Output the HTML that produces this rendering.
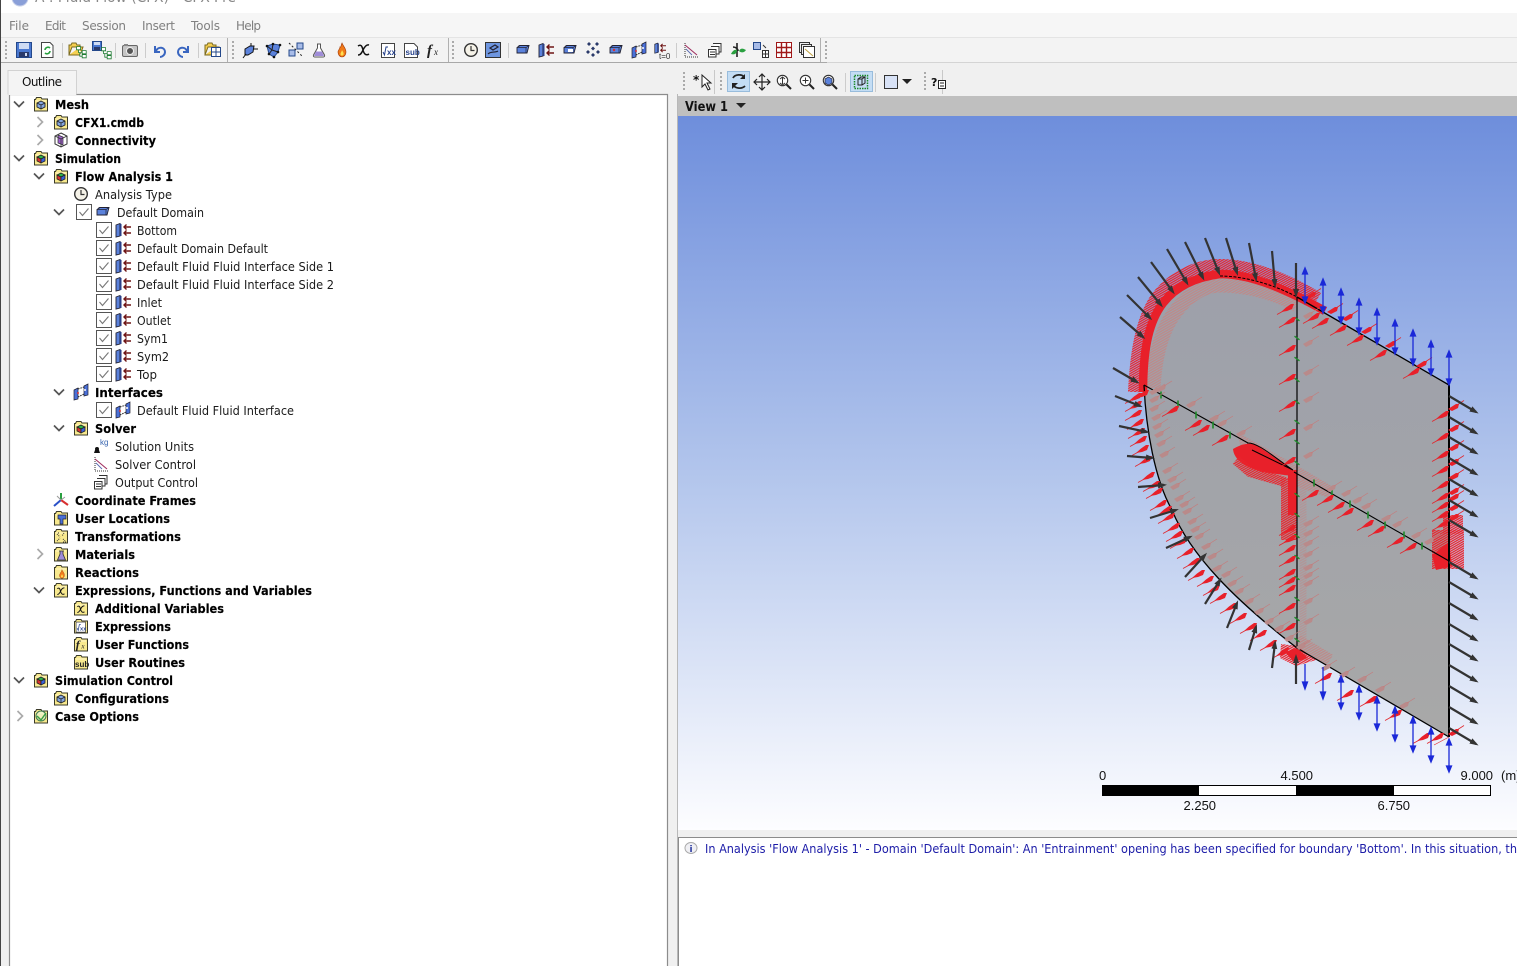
<!DOCTYPE html>
<html><head><meta charset="utf-8"><title>CFX-Pre</title>
<style>
html,body{margin:0;padding:0;width:1517px;height:966px;overflow:hidden;background:#f0f0f0}
svg{display:block;position:absolute;left:0;top:0}
.b{font:bold 12px "DejaVu Sans",sans-serif;fill:#000;stroke:#000;stroke-width:.15}
.n{font:12px "DejaVu Sans",sans-serif;fill:#1a1a1a}
.m{font:12px "DejaVu Sans",sans-serif;fill:#808080}
.s{font:13px "Liberation Sans",sans-serif;fill:#111}
.msg{font:12px "DejaVu Sans",sans-serif;fill:#1c1ca8}
</style></head><body>
<svg width="1517" height="966" viewBox="0 0 1517 966" xmlns="http://www.w3.org/2000/svg">
<defs>
<linearGradient id="sky" x1="0" y1="0" x2="0" y2="1"><stop offset="0" stop-color="#6e8edc"/><stop offset=".5" stop-color="#b2c5ec"/><stop offset="1" stop-color="#fdfdff"/></linearGradient>
<linearGradient id="face" x1="0" y1="0" x2="0" y2="1"><stop offset="0" stop-color="#9da0aa"/><stop offset="1" stop-color="#a8a8a8"/></linearGradient>
<pattern id="h" width="12" height="2" patternUnits="userSpaceOnUse" patternTransform="rotate(-30)"><rect width="12" height="1.300" fill="#e8242c"/></pattern>
<pattern id="hf" width="12" height="2.200" patternUnits="userSpaceOnUse" patternTransform="rotate(-30)"><rect width="12" height="1.300" fill="#bd8a8a"/></pattern>
<marker id="dk" markerWidth="9" markerHeight="7" refX="6" refY="3" orient="auto" markerUnits="userSpaceOnUse"><path d="M0 0L9 3L0 6Z" fill="#333"/></marker>
<g id="ra"><path d="M-15 8.500L-5 3" stroke="#e0282e" stroke-width=".8" fill="none"/><path d="M-11 6L-6 1.500L-1 -2L2 -2L0 3L-5 5Z" fill="#e8202a"/></g>
<g id="rf"><path d="M-1 0L6 -4L9 -4L8 0L2 3Z" fill="#b98a8a"/><path d="M7 -3L15 -8" stroke="#c47c7c" stroke-width=".7"/></g>
<g id="rb"><use href="#rf" x="10" y="-3"/><use href="#ra"/></g>
<g id="ro"><path d="M-1 1L7 -4L10 -4L9 0L3 3Z" fill="#e8202a"/><path d="M8 -3L15 -7.500" stroke="#e0282e" stroke-width=".8"/></g>
<path id="gt" d="M-2.500 -1.800L2.500 1.800" stroke="#1d8a2a" stroke-width="1.300"/>
<path id="gv" d="M0 -3.500V3.500" stroke="#1d8a2a" stroke-width="1.600"/>
<g id="fd"><path d="M1.500 3.500H2.500L3.500 1.500H8L9 3H14.500V15H1.500Z" fill="#f8e98e" stroke="#3a3a2a"/><path d="M3 5H13" stroke="#fff8c8"/></g>
<g id="cu"><path d="M8 5L12 7V11L8 13L4 11V7Z" fill="#84a6e0" stroke="#222" stroke-width=".9"/><path d="M4 7L8 9L12 7M8 9V13" stroke="#222" stroke-width=".8" fill="none"/></g>
<g id="fb"><use href="#fd"/><use href="#cu"/></g>
<g id="fg"><use href="#fd"/><path d="M8 5L12 7L8 9L4 7Z" fill="#2fb24a" stroke="#222" stroke-width=".8"/><path d="M4 7L8 9V13L4 11Z" fill="#d83030" stroke="#222" stroke-width=".8"/><path d="M12 7L8 9V13L12 11Z" fill="#3a60d8" stroke="#222" stroke-width=".8"/></g>
<g id="dc"><path d="M5 5H13L11 3.500H4Z" fill="#b8c8f0" stroke="#223" stroke-width=".7"/><path d="M2 5.500L5 3.500H14L12 11H2Z" fill="#5b82dc" stroke="#223" stroke-width=".9"/><path d="M2 5.500H11L14 3.500M11 5.500V11" fill="none" stroke="#223" stroke-width=".7"/></g>
<g id="bd"><path d="M1 3L5 1.500V14L1 15Z" fill="#5b82dc" stroke="#223" stroke-width=".9"/><path d="M5 1.500L6.500 2V14L5 14Z" fill="#2a3f88"/><path d="M16 5H9M11.500 2.500L9 5L11.500 7.500M16 11H9M11.500 8.500L9 11L11.500 13.500" fill="none" stroke="#6e1414" stroke-width="1.400"/></g>
<g id="ck"><rect x=".5" y=".5" width="15" height="15" fill="#fff" stroke="#555"/><path d="M3.500 8L6.500 11.500L12.500 4.500" fill="none" stroke="#777" stroke-width="1.100"/></g>
<path id="cd" d="M-5 -2.500L0 2.500L5 -2.500" fill="none" stroke="#555" stroke-width="1.700"/>
<path id="cr" d="M-2.500 -5L2.500 0L-2.500 5" fill="none" stroke="#aaa" stroke-width="1.700"/>
<g id="clk"><circle cx="8" cy="8" r="6.300" fill="#f5f2e8" stroke="#333" stroke-width="1.400"/><path d="M8 4V8.500H11.500" fill="none" stroke="#333" stroke-width="1.200"/></g>
<g id="itf"><path d="M1 6L5 4V15L1 16ZM11 2L15 0V11L11 12Z" fill="#4a70d8" stroke="#223" stroke-width=".7"/><path d="M5 5L11 3M5 13L11 10" stroke="#222" stroke-width="1" stroke-dasharray="1.500 1"/><circle cx="5" cy="9" r="1" fill="#d83030"/><circle cx="12" cy="6" r="1" fill="#fff"/></g>
<g id="so"><path d="M2 1V15H15" fill="none" stroke="#333" stroke-dasharray="1 1"/><path d="M2 3L14 13" stroke="#a03060" stroke-width="1.100"/><path d="M3 7L9 13" stroke="#5a6ab0" stroke-width=".9"/></g>
<g id="ou"><path d="M6 1.500H14V10H11" fill="#fff" stroke="#333"/><path d="M4 4.500H12V12H9" fill="#fff" stroke="#333"/><path d="M1.500 7.500H9V15H1.500Z" fill="#fff" stroke="#333"/><path d="M3 10H8M3 12.500H8" stroke="#333"/></g>
<g id="fol"><path d="M1 14V4H3L4 2H8L9 4H12V6H4L1 14H12L15 6H12" fill="#f5cf50" stroke="#7a6a20"/></g>
<g id="tre"><path d="M2 2H7V6H2ZM9 7H14V11H9ZM9 12H14V16H9ZM4.500 6V9.500H9M6 9.500V14H9" fill="#fff" stroke="#1c7a30" stroke-width="1"/></g>
<g id="chi"><path d="M2 4C5 2 6 4 7 8C8 12 10 14 13 12M13 3C10 2 8 6 7 8C6 10 5 13 2 13" fill="none" stroke="#111" stroke-width="1.500"/></g>
<g id="sq"><rect x="1.500" y="1.500" width="13" height="14" fill="#fff" stroke="#444"/><path d="M3 10L4.500 13L6 5H8" fill="none" stroke="#24408a"/><text x="7" y="13" font-family="Liberation Sans" font-size="8" font-weight="bold" fill="#24408a">xx</text></g>
<g id="sub"><path d="M1.500 1.500H11L14.500 5V15.500H1.500Z" fill="#fff" stroke="#444"/><text x="2.500" y="13" font-family="Liberation Sans" font-size="8" font-weight="bold" fill="#24408a">sub</text></g>
<g id="fx"><text x="1" y="13" font-family="Liberation Serif" font-size="15" font-style="italic" font-weight="bold" fill="#222">f</text><text x="8" y="13" font-family="Liberation Serif" font-size="9" font-style="italic" fill="#222">x</text></g>
<g id="flk"><path d="M6 2H10M6.500 2V6L2.500 13C2 14.500 3 15 4 15H12C13 15 14 14.500 13.500 13L9.500 6V2" fill="#fff" stroke="#555"/><path d="M5 9.500H11L13 14H3Z" fill="#9f8cd8"/></g>
<g id="flm"><path d="M8 1C9 4 12 6 12 10C12 13 10 15 8 15C6 15 4 13 4 10C4 8 6 7 6 5C7 6 7 3 8 1Z" fill="#f07a18" stroke="#a03808" stroke-width=".6"/><path d="M8 8C9 10 10 11 9.500 12.500C9 14 7 14 6.500 12.500C6.300 11 7.500 10 8 8Z" fill="#ffe050"/></g>
<g id="zm"><circle cx="6.500" cy="6.500" r="5.200" fill="#fff" stroke="#333" stroke-width="1.100"/><path d="M10.500 10.500L15 15" stroke="#222" stroke-width="2"/></g>
</defs>

<!-- chrome -->
<rect width="1517" height="966" fill="#f0f0f0"/>
<rect width="1517" height="13" fill="#fff"/>
<rect x="0" y="13" width="1517" height="25" fill="#f6f6f6"/>
<circle cx="20" cy="-2" r="8" fill="#8a9fd8" stroke="#c4cde8"/>
<text x="35" y="2" font-family="DejaVu Sans" font-size="14" fill="#888" textLength="201" lengthAdjust="spacingAndGlyphs">A : Fluid Flow (CFX) - CFX-Pre</text>
<rect x="0" y="0" width="1" height="966" fill="#444"/>
<text class="m" x="9" y="30" textLength="20">File</text><text class="m" x="45" y="30" textLength="21">Edit</text><text class="m" x="82" y="30" textLength="44">Session</text><text class="m" x="142" y="30" textLength="33">Insert</text><text class="m" x="191" y="30" textLength="29">Tools</text><text class="m" x="236" y="30" textLength="25">Help</text>

<!-- toolbar row 1 -->
<rect x="1" y="37" width="1516" height="26" fill="#f3f3f3"/>
<rect x="1" y="37" width="1516" height="1" fill="#e4e4e4"/>
<rect x="1" y="62" width="826" height="1" fill="#a8a8a8"/>
<rect x="827" y="62" width="690" height="1" fill="#d4d4d4"/>
<rect x="227" y="38" width="1" height="24" fill="#b0b0b0"/>
<rect x="448" y="38" width="1" height="24" fill="#b0b0b0"/>
<rect x="820" y="38" width="1" height="24" fill="#b0b0b0"/>
<path d="M6 41V60M233 41V60M453 41V60M826 41V60" stroke="#aaa" stroke-width="2" stroke-dasharray="2 2" fill="none"/>
<path d="M62.500 43V58M115.500 43V58M145.500 43V58M198.500 43V58M508.500 43V58M676.500 43V58" stroke="#ccc"/>
<g transform="translate(16,42)"><rect x=".5" y=".5" width="15" height="15" fill="#4a78d0" stroke="#24488a"/><rect x="3" y="1" width="10" height="6" fill="#cfdcf4"/><rect x="3" y="10" width="10" height="5" fill="#2a3a6a"/><rect x="9" y="11" width="2" height="3" fill="#cfdcf4"/></g>
<g transform="translate(39,42)"><path d="M2.500 .5H11L14 3.500V15.500H2.500Z" fill="#fff" stroke="#444"/><path d="M6 8A3 3 0 0 1 11 6M11 9A3 3 0 0 1 6 11" fill="none" stroke="#2aa040" stroke-width="1.600"/></g>
<use href="#fol" x="68" y="41"/><g transform="translate(75,45) scale(.8)"><use href="#tre"/></g>
<g transform="translate(92,41)"><rect x=".5" y=".5" width="9" height="9" fill="#4a78d0" stroke="#24488a"/><rect x="2" y="1" width="6" height="3" fill="#cfdcf4"/><rect x="2" y="6" width="6" height="3" fill="#2a3a6a"/></g><g transform="translate(100,46) scale(.8)"><use href="#tre"/></g>
<g transform="translate(122,43)"><rect x=".5" y="2.500" width="15" height="11" rx="1.500" fill="#c4c4c4" stroke="#666"/><rect x="2" y="1" width="4" height="2" fill="#888"/><circle cx="8" cy="8" r="3.500" fill="#555" stroke="#eee"/></g>
<path d="M155 46V52H160M156 51C158 46 165 47 165 52C165 55 162 57 160 57" fill="none" stroke="#3a66c0" stroke-width="2"/>
<path d="M188 46V52H183M187 51C185 46 178 47 178 52C178 55 181 57 183 57" fill="none" stroke="#3a66c0" stroke-width="2"/>
<use href="#fol" x="204" y="41"/><g transform="translate(211,47)"><rect x=".5" y=".5" width="9" height="9" fill="#fff" stroke="#24488a"/><path d="M5 1V9M1 5H9" stroke="#24488a"/></g>
<g transform="translate(242,43)"><path d="M3 6L8 3H12L11 9L6 12H3Z" fill="#5b82dc" stroke="#111"/><path d="M1 15L4 11M11 6H16M9 3V0" stroke="#111"/></g>
<g transform="translate(265,42)"><path d="M2 4L8 2L15 3L13 10L9 15L4 12Z" fill="#5b82dc" stroke="#24488a"/><path d="M8 2L7 8L13 10M2 4L7 8L4 12" fill="none" stroke="#222"/><g fill="#111"><circle cx="2" cy="4" r="1.300"/><circle cx="8" cy="2" r="1.300"/><circle cx="15" cy="3" r="1.300"/><circle cx="13" cy="10" r="1.300"/><circle cx="4" cy="12" r="1.300"/><circle cx="9" cy="15" r="1.300"/></g></g>
<g transform="translate(288,42)"><rect x="1" y="8" width="6" height="6" fill="#a8bce8" stroke="#24488a"/><rect x="9" y="1" width="6" height="6" fill="#a8bce8" stroke="#24488a"/><path d="M1 1L15 15" stroke="#222" stroke-dasharray="2 2"/></g>
<use href="#flk" x="311" y="42"/><use href="#flm" x="334" y="42"/><use href="#chi" x="356" y="42"/><use href="#sq" x="380" y="42"/><use href="#sub" x="403" y="42"/><use href="#fx" x="426" y="42"/>
<use href="#clk" x="463" y="42"/>
<g transform="translate(485,42)"><rect x=".5" y=".5" width="15" height="15" fill="#6e96e0" stroke="#333"/><path d="M3 12C6 9 10 11 13 9M5 6L10 3L13 5L8 8Z" fill="none" stroke="#223" stroke-width="1.200"/></g>
<use href="#dc" x="515" y="42"/><use href="#bd" x="538" y="42"/>
<g transform="translate(562,42)"><use href="#dc"/><rect x="6" y="7" width="5" height="3" fill="#fff"/></g>
<g transform="translate(585,42)" fill="#2a3a6a"><path d="M4 0L6 2L4 4L2 2ZM12 0L14 2L12 4L10 2ZM8 4.500L10 6.500L8 8.500L6 6.500ZM3 8L5 10L3 12L1 10ZM13 8L15 10L13 12L11 10ZM8 11L10 13L8 15L6 13Z"/></g>
<g transform="translate(608,42)"><use href="#dc"/><circle cx="6" cy="8" r="1.200" fill="#d83030"/></g>
<use href="#itf" x="631" y="42"/>
<g transform="translate(654,42)"><use href="#bd" transform="scale(.75)"/><text x="5" y="17" font-family="Liberation Sans" font-size="8" fill="#333">t=0</text></g>
<use href="#so" x="683" y="42"/><use href="#ou" x="707" y="42"/>
<g transform="translate(730,42)"><path d="M7 1V15M3 5C6 5 8 7 8 9" stroke="#222" stroke-width="1.600" fill="none"/><path d="M9 9C11 5 14 7 16 8C14 11 11 11 9 9Z" fill="#2aa040"/><path d="M7 8C4 7 2 10 1 12C4 13 7 12 7 8Z" fill="#2aa040"/></g>
<g transform="translate(753,42)"><rect x=".5" y=".5" width="7" height="7" fill="#a8bce8" stroke="#24488a"/><rect x="9.500" y="8.500" width="6" height="7" fill="#fff" stroke="#333"/><path d="M12.500 9V15M10 12H15M10 3L13 6" stroke="#333"/></g>
<g transform="translate(776,42)"><rect x=".5" y=".5" width="15" height="15" fill="#fff" stroke="#a01818"/><path d="M1 5.500H15M1 10.500H15M5.500 1V15M10.500 1V15" stroke="#a01818" stroke-width="1.400"/></g>
<g transform="translate(799,42)"><rect x=".5" y=".5" width="10" height="10" fill="#eee" stroke="#333"/><rect x="2.500" y="2.500" width="10" height="10" fill="#eee" stroke="#333"/><rect x="4.500" y="4.500" width="11" height="11" fill="#fff" stroke="#333"/><path d="M6 7L14 14" stroke="#c0a040"/></g>

<!-- toolbar row 2 -->
<rect x="680" y="64" width="837" height="32" fill="#f0f0f0"/>
<path d="M684 72V92M721 72V92" stroke="#aaa" stroke-width="2" stroke-dasharray="2 2"/>
<path d="M714.500 70V94M942.500 70V94" stroke="#c8c8c8"/>
<path d="M925 72V92" stroke="#aaa" stroke-width="2" stroke-dasharray="2 2"/>
<path d="M845.500 73V92M875.500 73V92" stroke="#ccc"/>
<text x="693" y="84" font-family="DejaVu Sans" font-size="12" font-weight="bold" fill="#111">*</text>
<path d="M702 75L702 87L705 84L708 90L710 89L707 83L711 83Z" fill="#fff" stroke="#222"/>
<rect x="727.500" y="71.500" width="22" height="20" fill="#c4ddf4" stroke="#98bcdc"/>
<path d="M733 78C735 74 742 74 744 77M745 86C742 89 736 89 733 85" fill="none" stroke="#222" stroke-width="1.800"/><path d="M745 74V79H740ZM732 89V83H738Z" fill="#222"/>
<path d="M762 74V90M754 82H770M759 77L762 74L765 77M759 87L762 90L765 87M757 79L754 82L757 85M767 79L770 82L767 85" fill="none" stroke="#222" stroke-width="1.200"/>
<use href="#zm" x="776" y="74"/><path d="M782.500 77.500V84M780 79L782.500 77L785 79M780 83L782.500 85L785 83" stroke="#333" fill="none"/>
<use href="#zm" x="799" y="74"/><path d="M802.500 80.500H808.500M805.500 77.500V83.500" stroke="#333"/>
<use href="#zm" x="822" y="74"/><path d="M828.500 77L832 79V83L828.500 85L825 83V79Z" fill="#5b82dc" stroke="#223" stroke-width=".7"/>
<rect x="850.500" y="71.500" width="22" height="20" fill="#c4ddf4" stroke="#98bcdc"/>
<rect x="854.500" y="75.500" width="13" height="13" fill="none" stroke="#1d8a2a" stroke-width="1.500" stroke-dasharray="1.500 1"/>
<path d="M858 79L861 77H865V83L862 85H858Z" fill="none" stroke="#222"/><path d="M858 79H862V85M862 79L865 77" stroke="#222" fill="none"/>
<rect x="884.500" y="75.500" width="13" height="13" fill="#d8e2f6" stroke="#333"/><path d="M902 79H912L907 84Z" fill="#222"/>
<text x="931" y="86" font-family="DejaVu Sans" font-size="11" font-weight="bold" fill="#111">?</text><rect x="938.500" y="80.500" width="7" height="8" fill="#fff" stroke="#222"/><path d="M940 83H944M940 86H944" stroke="#222"/>

<!-- outline panel -->
<rect x="9" y="94" width="659" height="872" fill="#fff"/>
<path d="M9.500 966V94.500H667.500V966" fill="none" stroke="#8c8c8c" stroke-width="1.200"/>
<path d="M8 94.500V70.500H76.500V94.500" fill="#f4f4f4" stroke="#d2d2d2"/>
<rect x="9" y="93" width="67" height="2" fill="#f4f4f4"/>
<text x="22" y="86" font-family="DejaVu Sans" font-size="12" fill="#111" textLength="40">Outline</text>

<!-- chevrons -->
<use href="#cd" x="19" y="104"/><use href="#cr" x="40" y="122"/><use href="#cr" x="40" y="140"/><use href="#cd" x="19" y="158"/><use href="#cd" x="39" y="176"/><use href="#cd" x="59" y="212"/><use href="#cd" x="59" y="392"/><use href="#cd" x="59" y="428"/><use href="#cr" x="40" y="554"/><use href="#cd" x="39" y="590"/><use href="#cd" x="19" y="680"/><use href="#cr" x="20" y="716"/>

<!-- tree icons -->
<use href="#fb" x="33" y="96"/><use href="#fb" x="53" y="114"/>
<g transform="translate(53,132)"><path d="M8 1L14 4V12L8 15L2 12V4Z" fill="#fff" stroke="#333"/><path d="M5 3L10 5V13L5 11Z" fill="#a060d0" stroke="#333" stroke-width=".7"/><path d="M2 4L8 7L14 4M8 7V15" fill="none" stroke="#333" stroke-width=".8"/></g>
<use href="#fg" x="33" y="150"/><use href="#fg" x="53" y="168"/>
<use href="#clk" x="73" y="186"/>
<use href="#ck" x="76" y="204"/><use href="#dc" x="95" y="204"/>
<use href="#ck" x="96" y="222"/><use href="#bd" x="115" y="222"/>
<use href="#ck" x="96" y="240"/><use href="#bd" x="115" y="240"/>
<use href="#ck" x="96" y="258"/><use href="#bd" x="115" y="258"/>
<use href="#ck" x="96" y="276"/><use href="#bd" x="115" y="276"/>
<use href="#ck" x="96" y="294"/><use href="#bd" x="115" y="294"/>
<use href="#ck" x="96" y="312"/><use href="#bd" x="115" y="312"/>
<use href="#ck" x="96" y="330"/><use href="#bd" x="115" y="330"/>
<use href="#ck" x="96" y="348"/><use href="#bd" x="115" y="348"/>
<use href="#ck" x="96" y="366"/><use href="#bd" x="115" y="366"/>
<use href="#itf" x="73" y="384"/>
<use href="#ck" x="96" y="402"/><use href="#itf" x="115" y="402"/>
<use href="#fg" x="73" y="420"/>
<g transform="translate(93,438)"><circle cx="4" cy="11" r="2" fill="#111"/><path d="M1 15L2 12H6L7 15Z" fill="#111"/><text x="7" y="7" font-family="Liberation Sans" font-size="8" fill="#3a66b0">kg</text></g>
<use href="#so" x="93" y="456"/><use href="#ou" x="93" y="474"/>
<g transform="translate(53,492)"><path d="M8 8V1" stroke="#2aa040" stroke-width="2"/><path d="M8 8L1 14" stroke="#2a50c8" stroke-width="2"/><path d="M8 8L15 13" stroke="#d83030" stroke-width="2"/><path d="M8 8L4 4M8 8L12 5" stroke="#999"/></g>
<use href="#fd" x="53" y="510"/><path d="M58 515H66V519L63 519V524H60V519H58Z" fill="#4a70d8" stroke="#223" stroke-width=".7"/>
<use href="#fd" x="53" y="528"/><path d="M57 534L60 537M64 533L62 536M57 541L60 538M63 539L66 542M58 533H60M63 542H66" stroke="#333" stroke-dasharray="1 1"/>
<use href="#fd" x="53" y="546"/><path d="M59 551H64M60 551V554L57.500 560H65.500L63 554V551" fill="#9f8cd8" stroke="#333" stroke-width=".8"/>
<use href="#fd" x="53" y="564"/><g transform="translate(57,569) scale(.62)"><use href="#flm"/></g>
<use href="#fd" x="53" y="582"/><g transform="translate(56,586) scale(.65)"><use href="#chi"/></g>
<use href="#fd" x="73" y="600"/><g transform="translate(76,604) scale(.65)"><use href="#chi"/></g>
<use href="#fd" x="73" y="618"/><g transform="translate(75,621) scale(.72)"><use href="#sq"/></g>
<use href="#fd" x="73" y="636"/><g transform="translate(75,638) scale(.8)"><use href="#fx"/></g>
<use href="#fd" x="73" y="654"/><text x="75" y="667" font-family="Liberation Sans" font-size="8" font-weight="bold" fill="#222">sub</text>
<use href="#fg" x="33" y="672"/>
<use href="#fb" x="53" y="690"/>
<use href="#fd" x="33" y="708"/><circle cx="41" cy="716" r="5" fill="#e6f4e6" stroke="#3a7a50" fill-opacity=".5"/><path d="M37 716L41 720L46 713" fill="none" stroke="#3aa048" stroke-width="1.500"/>

<!-- tree text -->
<g transform="translate(0,1)">
<text class="b" x="55" y="108" textLength="34" lengthAdjust="spacingAndGlyphs">Mesh</text>
<text class="b" x="75" y="126" textLength="69" lengthAdjust="spacingAndGlyphs">CFX1.cmdb</text>
<text class="b" x="75" y="144" textLength="81" lengthAdjust="spacingAndGlyphs">Connectivity</text>
<text class="b" x="55" y="162" textLength="66" lengthAdjust="spacingAndGlyphs">Simulation</text>
<text class="b" x="75" y="180" textLength="98" lengthAdjust="spacingAndGlyphs">Flow Analysis 1</text>
<text class="n" x="95" y="198" textLength="77" lengthAdjust="spacingAndGlyphs">Analysis Type</text>
<text class="n" x="117" y="216" textLength="87" lengthAdjust="spacingAndGlyphs">Default Domain</text>
<text class="n" x="137" y="234" textLength="40" lengthAdjust="spacingAndGlyphs">Bottom</text>
<text class="n" x="137" y="252" textLength="131" lengthAdjust="spacingAndGlyphs">Default Domain Default</text>
<text class="n" x="137" y="270" textLength="197" lengthAdjust="spacingAndGlyphs">Default Fluid Fluid Interface Side 1</text>
<text class="n" x="137" y="288" textLength="197" lengthAdjust="spacingAndGlyphs">Default Fluid Fluid Interface Side 2</text>
<text class="n" x="137" y="306" textLength="25" lengthAdjust="spacingAndGlyphs">Inlet</text>
<text class="n" x="137" y="324" textLength="34" lengthAdjust="spacingAndGlyphs">Outlet</text>
<text class="n" x="137" y="342" textLength="31" lengthAdjust="spacingAndGlyphs">Sym1</text>
<text class="n" x="137" y="360" textLength="32" lengthAdjust="spacingAndGlyphs">Sym2</text>
<text class="n" x="137" y="378" textLength="20" lengthAdjust="spacingAndGlyphs">Top</text>
<text class="b" x="95" y="396" textLength="68" lengthAdjust="spacingAndGlyphs">Interfaces</text>
<text class="n" x="137" y="414" textLength="157" lengthAdjust="spacingAndGlyphs">Default Fluid Fluid Interface</text>
<text class="b" x="95" y="432" textLength="41" lengthAdjust="spacingAndGlyphs">Solver</text>
<text class="n" x="115" y="450" textLength="79" lengthAdjust="spacingAndGlyphs">Solution Units</text>
<text class="n" x="115" y="468" textLength="81" lengthAdjust="spacingAndGlyphs">Solver Control</text>
<text class="n" x="115" y="486" textLength="83" lengthAdjust="spacingAndGlyphs">Output Control</text>
<text class="b" x="75" y="504" textLength="121" lengthAdjust="spacingAndGlyphs">Coordinate Frames</text>
<text class="b" x="75" y="522" textLength="95" lengthAdjust="spacingAndGlyphs">User Locations</text>
<text class="b" x="75" y="540" textLength="106" lengthAdjust="spacingAndGlyphs">Transformations</text>
<text class="b" x="75" y="558" textLength="60" lengthAdjust="spacingAndGlyphs">Materials</text>
<text class="b" x="75" y="576" textLength="64" lengthAdjust="spacingAndGlyphs">Reactions</text>
<text class="b" x="75" y="594" textLength="237" lengthAdjust="spacingAndGlyphs">Expressions, Functions and Variables</text>
<text class="b" x="95" y="612" textLength="129" lengthAdjust="spacingAndGlyphs">Additional Variables</text>
<text class="b" x="95" y="630" textLength="76" lengthAdjust="spacingAndGlyphs">Expressions</text>
<text class="b" x="95" y="648" textLength="94" lengthAdjust="spacingAndGlyphs">User Functions</text>
<text class="b" x="95" y="666" textLength="90" lengthAdjust="spacingAndGlyphs">User Routines</text>
<text class="b" x="55" y="684" textLength="118" lengthAdjust="spacingAndGlyphs">Simulation Control</text>
<text class="b" x="75" y="702" textLength="94" lengthAdjust="spacingAndGlyphs">Configurations</text>
<text class="b" x="55" y="720" textLength="84" lengthAdjust="spacingAndGlyphs">Case Options</text>
</g>

<!-- viewer -->
<rect x="678" y="96" width="839" height="20" fill="#bfbfbf"/>
<text x="685" y="111" font-family="DejaVu Sans" font-size="13" font-weight="bold" fill="#111" textLength="43" lengthAdjust="spacingAndGlyphs">View 1</text>
<path d="M736 103H746L741 108Z" fill="#222"/>
<rect x="678" y="116" width="839" height="714" fill="url(#sky)"/>

<!-- model -->
<path d="M1449 385L1297 297C1275 285 1245 276 1220 276C1200 276 1180 286 1165 302C1152 318 1145 345 1144 385C1146 430 1155 480 1172 510C1190 555 1235 600 1297 648L1449 737Z" fill="url(#face)"/>
<path d="M1297 305C1275 292 1245 285 1220 285C1204 285 1188 295 1176 311C1164 326 1155 350 1153 388" fill="none" stroke="url(#hf)" stroke-width="15"/>
<path d="M1246 444L1296 472L1330 492L1290 478L1250 462Z" fill="url(#hf)" stroke="url(#hf)" stroke-width="12"/>
<path d="M1297 640L1330 660" stroke="url(#hf)" stroke-width="12" fill="none"/>
<path d="M1303 480V660" stroke="url(#hf)" stroke-width="7" fill="none" opacity=".6"/>
<!-- hatch outer -->
<path d="M1318 298C1285 278 1250 265 1220 265C1195 265 1172 278 1157 297C1142 318 1136 350 1134 392" fill="none" stroke="url(#h)" stroke-width="12"/>
<path d="M1432 530H1464V569H1432Z" fill="url(#h)"/>
<path d="M1432 555L1449 542L1452 566L1436 570Z" fill="#e8202a"/>
<path d="M1443 515H1463V534H1443Z" fill="url(#h)"/>
<path d="M1281 478H1297V540H1281Z" fill="url(#h)"/>
<path d="M1288 470H1297V515H1288Z" fill="#e8202a"/>
<path d="M1281 644L1297 646L1316 660L1296 666L1280 658Z" fill="url(#h)"/>
<path d="M1285 652L1297 648L1308 658L1294 662Z" fill="#e8202a"/>
<!-- solid band -->
<path d="M1143 392C1143 345 1150 320 1163 303C1177 285 1197 277 1220 274C1245 274 1275 283 1325 311" fill="none" stroke="#e8202a" stroke-width="8.500"/>
<!-- airfoil blob -->
<path d="M1233 449C1240 445 1250 441 1258 446L1293 470L1292 476L1262 472C1245 467 1234 460 1233 449Z" fill="#e8202a"/>
<path d="M1236 460L1250 472L1285 482" fill="none" stroke="url(#h)" stroke-width="10"/>

<!-- black lines -->
<path d="M1449 385L1297 297M1297 648L1449 737M1144 385C1146 430 1155 480 1172 510C1190 555 1235 600 1297 648" fill="none" stroke="#000" stroke-width="1.300"/>
<path d="M1449 385V737" stroke="#000" stroke-width="2"/>
<path d="M1297 297V648" stroke="#000" stroke-width="1.200"/>
<path d="M1144 385L1248 443M1294 472L1449 561" stroke="#000" stroke-width="1.100"/>
<path d="M1247 443C1258 442 1275 458 1293 470M1252 450L1293 470" fill="none" stroke="#000" stroke-width="1"/>
<path d="M1220 276C1245 276 1275 285 1297 297" fill="none" stroke="#000" stroke-width="1" stroke-dasharray="3 1.500"/>

<!-- green ticks -->
<g><use href="#gt" x="1297" y="319"/><use href="#gt" x="1297" y="338"/><use href="#gt" x="1297" y="359"/><use href="#gt" x="1297" y="380"/><use href="#gt" x="1297" y="402"/><use href="#gt" x="1297" y="422"/><use href="#gt" x="1297" y="442"/><use href="#gt" x="1297" y="463"/><use href="#gt" x="1297" y="495"/><use href="#gt" x="1297" y="515"/><use href="#gt" x="1297" y="536"/><use href="#gt" x="1297" y="557"/><use href="#gt" x="1297" y="578"/><use href="#gt" x="1297" y="599"/><use href="#gt" x="1297" y="619"/><use href="#gt" x="1297" y="640"/>
<use href="#gv" x="1161" y="395"/><use href="#gv" x="1178" y="404"/><use href="#gv" x="1196" y="415"/><use href="#gv" x="1213" y="425"/><use href="#gv" x="1230" y="435"/><use href="#gv" x="1314" y="483"/><use href="#gv" x="1332" y="493"/><use href="#gv" x="1350" y="504"/><use href="#gv" x="1368" y="515"/><use href="#gv" x="1385" y="525"/><use href="#gv" x="1404" y="535"/><use href="#gv" x="1422" y="546"/></g>

<!-- red arrows -->
<g>
<use href="#rb" x="1140" y="395"/><use href="#rb" x="1140" y="403"/><use href="#rb" x="1140" y="412"/><use href="#rb" x="1142" y="421"/><use href="#rb" x="1143" y="430"/><use href="#rb" x="1145" y="438"/><use href="#rb" x="1147" y="447"/><use href="#rb" x="1150" y="458"/><use href="#rb" x="1153" y="474"/><use href="#rb" x="1158" y="483"/><use href="#rb" x="1161" y="490"/><use href="#rb" x="1165" y="502"/><use href="#rb" x="1170" y="508"/><use href="#rb" x="1173" y="515"/><use href="#rb" x="1178" y="525"/><use href="#rb" x="1181" y="533"/><use href="#rb" x="1185" y="540"/><use href="#rb" x="1192" y="550"/><use href="#rb" x="1198" y="560"/><use href="#rb" x="1203" y="572"/><use href="#rb" x="1212" y="578"/><use href="#rb" x="1218" y="587"/><use href="#rb" x="1225" y="595"/><use href="#rb" x="1235" y="605"/><use href="#rb" x="1245" y="615"/><use href="#rb" x="1255" y="625"/><use href="#rb" x="1265" y="632"/><use href="#rb" x="1275" y="642"/><use href="#rb" x="1287" y="650"/>
<use href="#rb" x="1294" y="319"/><use href="#rb" x="1294" y="347"/><use href="#rb" x="1294" y="376"/><use href="#rb" x="1294" y="403"/><use href="#rb" x="1294" y="431"/><use href="#rb" x="1294" y="459"/><use href="#rb" x="1294" y="527"/><use href="#rb" x="1294" y="537"/><use href="#rb" x="1294" y="547"/><use href="#rb" x="1294" y="558"/><use href="#rb" x="1294" y="571"/><use href="#rb" x="1294" y="579"/><use href="#rb" x="1294" y="587"/><use href="#rb" x="1294" y="605"/><use href="#rb" x="1294" y="625"/>
<use href="#rb" x="1147" y="392"/><use href="#rb" x="1177" y="408"/><use href="#rb" x="1200" y="422"/><use href="#rb" x="1208" y="427"/><use href="#rb" x="1227" y="437"/><use href="#rb" x="1317" y="492"/><use href="#rb" x="1332" y="497"/><use href="#rb" x="1343" y="504"/><use href="#rb" x="1352" y="510"/><use href="#rb" x="1372" y="522"/><use href="#rb" x="1383" y="528"/><use href="#rb" x="1402" y="539"/><use href="#rb" x="1415" y="545"/>
<use href="#ra" x="1292" y="306"/><use href="#ra" x="1318" y="315"/><use href="#ra" x="1327" y="320"/><use href="#ra" x="1345" y="327"/><use href="#ra" x="1362" y="337"/><use href="#ra" x="1385" y="352"/><use href="#ra" x="1418" y="370"/>
<use href="#ro" x="1306" y="296"/><use href="#ro" x="1328" y="311"/><use href="#ro" x="1343" y="318"/><use href="#ro" x="1362" y="331"/><use href="#ro" x="1386" y="345"/><use href="#ro" x="1417" y="365"/>
<use href="#ra" x="1447" y="413"/><use href="#ra" x="1447" y="435"/><use href="#ra" x="1447" y="453"/><use href="#ra" x="1447" y="468"/><use href="#ra" x="1447" y="483"/><use href="#ra" x="1447" y="495"/><use href="#ra" x="1447" y="504"/><use href="#ra" x="1447" y="513"/><use href="#ra" x="1447" y="522"/>
<use href="#ro" x="1449" y="408"/><use href="#ro" x="1449" y="429"/><use href="#ro" x="1449" y="448"/><use href="#ro" x="1449" y="463"/><use href="#ro" x="1449" y="477"/><use href="#ro" x="1449" y="492"/><use href="#ro" x="1449" y="498"/><use href="#ro" x="1449" y="508"/><use href="#ro" x="1449" y="518"/>
<use href="#ra" x="1330" y="675"/><use href="#ra" x="1352" y="692"/><use href="#ra" x="1375" y="698"/><use href="#ra" x="1400" y="712"/><use href="#ra" x="1428" y="735"/><use href="#ra" x="1442" y="735"/>
<use href="#rf" x="1322" y="668"/><use href="#rf" x="1340" y="675"/><use href="#rf" x="1358" y="680"/><use href="#rf" x="1376" y="690"/><use href="#rf" x="1400" y="706"/>
<use href="#ro" x="1449" y="733"/>
<path d="M1434 745L1449 737" stroke="#e0282e" stroke-width=".6"/>
</g>

<!-- dark arrows -->
<g stroke="#333" stroke-width="2.200" fill="none">
<path marker-end="url(#dk)" d="M1205 238L1219 273"/><path marker-end="url(#dk)" d="M1226 238L1237 273"/><path marker-end="url(#dk)" d="M1249 243L1256 279"/><path marker-end="url(#dk)" d="M1272 251L1275 285"/><path marker-end="url(#dk)" d="M1296 263V295"/>
<path marker-end="url(#dk)" d="M1185 242L1203 278"/><path marker-end="url(#dk)" d="M1167 249L1187 283"/><path marker-end="url(#dk)" d="M1151 262L1173 292"/><path marker-end="url(#dk)" d="M1138 277L1161 305"/><path marker-end="url(#dk)" d="M1127 295L1150 318"/><path marker-end="url(#dk)" d="M1120 317L1143 337"/><path marker-end="url(#dk)" d="M1113 368L1137 382"/><path marker-end="url(#dk)" d="M1115 396L1140 406"/><path marker-end="url(#dk)" d="M1119 426L1147 432"/><path marker-end="url(#dk)" d="M1127 456L1152 458"/><path marker-end="url(#dk)" d="M1138 487L1164 485"/><path marker-end="url(#dk)" d="M1150 518L1176 510"/><path marker-end="url(#dk)" d="M1166 548L1190 537"/><path marker-end="url(#dk)" d="M1185 577L1205 555"/><path marker-end="url(#dk)" d="M1205 604L1220 580"/><path marker-end="url(#dk)" d="M1227 628L1237 603"/><path marker-end="url(#dk)" d="M1249 650L1256 627"/><path marker-end="url(#dk)" d="M1272 668L1275 643"/><path marker-end="url(#dk)" d="M1296 684V657"/>
<path marker-end="url(#dk)" d="M1449 396L1476 412"/><path marker-end="url(#dk)" d="M1449 417L1476 433"/><path marker-end="url(#dk)" d="M1449 437L1476 453"/><path marker-end="url(#dk)" d="M1449 458L1476 474"/><path marker-end="url(#dk)" d="M1449 479L1476 495"/><path marker-end="url(#dk)" d="M1449 500L1476 516"/><path marker-end="url(#dk)" d="M1449 520L1476 536"/><path marker-end="url(#dk)" d="M1449 562L1476 578"/><path marker-end="url(#dk)" d="M1449 582L1476 598"/><path marker-end="url(#dk)" d="M1449 603L1476 619"/><path marker-end="url(#dk)" d="M1449 624L1476 640"/><path marker-end="url(#dk)" d="M1449 644L1476 660"/><path marker-end="url(#dk)" d="M1449 665L1476 681"/><path marker-end="url(#dk)" d="M1449 686L1476 702"/><path marker-end="url(#dk)" d="M1449 707L1476 723"/><path marker-end="url(#dk)" d="M1449 728L1476 744"/>
</g>

<!-- blue arrows -->
<g stroke="#1a28d8" stroke-width="1.300" fill="#1a28d8">
<path d="M1305 272V302M1305 268L1302.500 274H1307.500ZM1305 303L1302.500 297H1307.500Z"/><path d="M1323 283V312M1323 279L1320.500 285H1325.500ZM1323 313L1320.500 307H1325.500Z"/><path d="M1341 293V322M1341 289L1338.500 295H1343.500ZM1341 323L1338.500 317H1343.500Z"/><path d="M1359 303V333M1359 299L1356.500 305H1361.500ZM1359 334L1356.500 328H1361.500Z"/><path d="M1377 313V343M1377 309L1374.500 315H1379.500ZM1377 344L1374.500 338H1379.500Z"/><path d="M1395 324V353M1395 320L1392.500 326H1397.500ZM1395 354L1392.500 348H1397.500Z"/><path d="M1413 334V364M1413 330L1410.500 336H1415.500ZM1413 365L1410.500 359H1415.500Z"/><path d="M1431 345V374M1431 341L1428.500 347H1433.500ZM1431 375L1428.500 369H1433.500Z"/><path d="M1449 355V384M1449 351L1446.500 357H1451.500ZM1449 385L1446.500 379H1451.500Z"/>
<path d="M1305 664V688M1305 689L1302.500 682H1307.500Z"/><path d="M1323 667V698M1323 699L1320.500 692H1325.500Z"/><path d="M1341 676V708M1341 709L1338.500 703H1343.500ZM1341 676L1338.500 682H1343.500Z"/><path d="M1359 687V718M1359 719L1356.500 713H1361.500ZM1359 686L1356.500 692H1361.500Z"/><path d="M1377 697V729M1377 730L1374.500 724H1379.500ZM1377 697L1374.500 703H1379.500Z"/><path d="M1395 707V740M1395 741L1392.500 735H1397.500ZM1395 707L1392.500 713H1397.500Z"/><path d="M1413 717V751M1413 752L1410.500 746H1415.500ZM1413 717L1410.500 723H1415.500Z"/><path d="M1431 728V761M1431 762L1428.500 756H1433.500ZM1431 728L1428.500 734H1433.500Z"/><path d="M1449 739V771M1449 772L1446.500 766H1451.500ZM1449 739L1446.500 745H1451.500Z"/>
</g>

<!-- scale -->
<text class="s" x="1099" y="780">0</text><text class="s" x="1280.500" y="780">4.500</text><text class="s" x="1460.500" y="780">9.000</text><text class="s" x="1501" y="780">(m)</text>
<rect x="1102.500" y="785.500" width="388" height="10" fill="#fff" stroke="#000"/>
<rect x="1102" y="785" width="97" height="11"/><rect x="1296" y="785" width="98" height="11"/>
<text class="s" x="1183.500" y="810">2.250</text><text class="s" x="1377.500" y="810">6.750</text>

<!-- message -->
<rect x="678" y="830" width="839" height="7" fill="#f0f0f0"/>
<rect x="678" y="837" width="839" height="129" fill="#fff"/>
<path d="M678.500 966V837.500H1517" fill="none" stroke="#8c8c8c"/>
<ellipse cx="691" cy="848" rx="6" ry="5.500" fill="#f0f0f4" stroke="#aaa"/><text x="689.500" y="852" font-family="DejaVu Sans" font-size="9" font-weight="bold" fill="#2a3aa0">i</text>
<text class="msg" x="705" y="853" textLength="812" lengthAdjust="spacingAndGlyphs">In Analysis 'Flow Analysis 1' - Domain 'Default Domain': An 'Entrainment' opening has been specified for boundary 'Bottom'. In this situation, th</text>
<rect x="677" y="94" width="1" height="872" fill="#b8b8b8"/>
</svg>
</body></html>
